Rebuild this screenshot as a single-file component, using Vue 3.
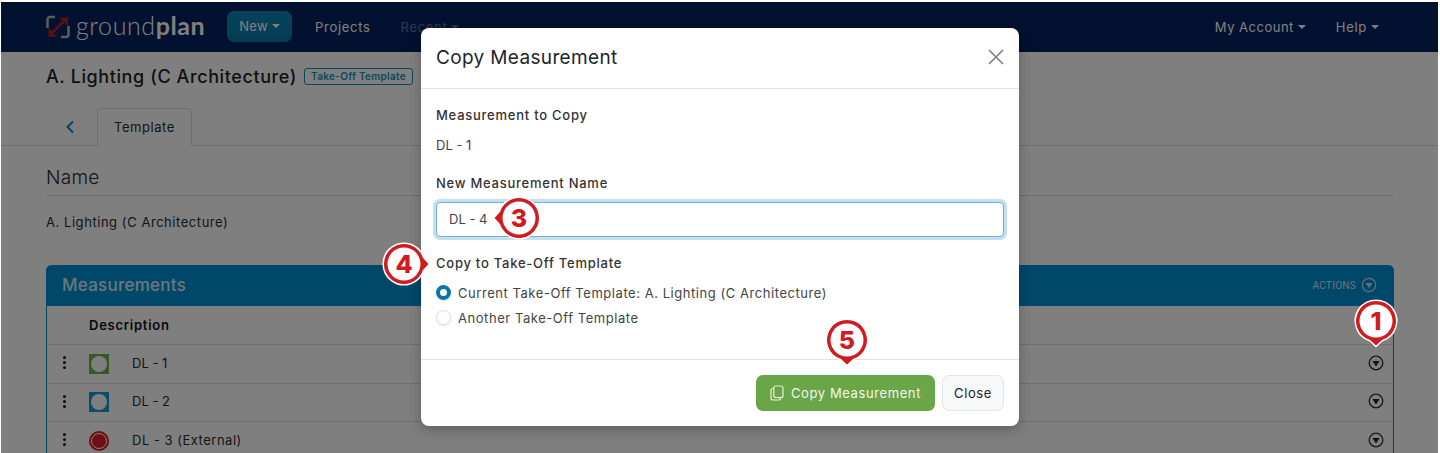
<template>
  <div class="page">
    <header class="nav">
      <div class="brand">
        <svg width="24" height="24" viewBox="0 0 24 24" fill="none">
          <path d="M9 2H4a2.500 2.500 0 0 0-2.500 2.500V13M15 22h5a2.500 2.500 0 0 0 2.500-2.500V11" stroke="#b9b9b9" stroke-width="2.500" />
          <path d="M4 20 20 4" stroke="#a82323" stroke-width="2.800" />
          <path d="M13 2.500h9v9zM2.500 22v-9l9 9z" fill="#a82323" />
        </svg>
        <span class="brand_name">ground<b>plan</b></span>
      </div>
      <a class="new_btn">New<i class="caret"></i></a>
      <a class="nav_link">Projects</a>
      <a class="nav_link recent">Recent<i class="caret"></i></a>
      <span class="spacer"></span>
      <a class="nav_link">My Account<i class="caret"></i></a>
      <a class="nav_link help">Help<i class="caret"></i></a>
    </header>

    <main class="content">
      <div class="title_row">
        <h1>A. Lighting (C Architecture)</h1>
        <span class="badge">Take-Off Template</span>
      </div>
      <div class="tabs">
        <svg class="back" width="12" height="14" viewBox="0 0 12 14" fill="none">
          <path d="M9 1.500 3.500 7 9 12.500" stroke="#0a88bd" stroke-width="2" />
        </svg>
        <div class="tab">Template</div>
      </div>
      <h2 class="section_name">Name</h2>
      <p class="section_value">A. Lighting (C Architecture)</p>

      <section class="card">
        <div class="card_head">
          <span class="card_title">Measurements</span>
          <span class="actions">ACTIONS</span>
          <svg width="16" height="16" viewBox="0 0 16 16" fill="none">
            <circle cx="8" cy="8" r="6.700" stroke="#fff" stroke-width="1.200" opacity=".75" />
            <path d="M4.500 6h7L8 11z" fill="#fff" opacity=".75" />
          </svg>
        </div>
        <div class="table_head">Description</div>
        <div class="row" v-for="row in rows" :key="row.name">
          <span class="kebab"><i></i><i></i><i></i></span>
          <span class="swatch" :class="row.kind"><i></i></span>
          <span class="row_name" :class="row.kind">{{ row.name }}</span>
          <svg class="row_action" width="16" height="16" viewBox="0 0 16 16" fill="none">
            <circle cx="8" cy="8" r="6.800" stroke="#333" stroke-width="1.300" />
            <path d="M4.500 6h7L8 11.500z" fill="#222" />
          </svg>
        </div>
      </section>
    </main>

    <div class="backdrop"></div>

    <div class="modal">
      <div class="modal_head">
        <h3>Copy Measurement</h3>
        <svg width="18" height="18" viewBox="0 0 18 18" fill="none">
          <path d="M2 2l14 14M16 2 2 16" stroke="#7c7c7c" stroke-width="1.600" />
        </svg>
      </div>
      <div class="modal_body">
        <label class="field_label">Measurement to Copy</label>
        <p class="static_value">DL - 1</p>
        <label class="field_label">New Measurement Name</label>
        <input class="text_input" type="text" v-model="newName" />
        <label class="field_label">Copy to Take-Off Template</label>
        <div class="radio_row">
          <span class="radio checked"></span>
          <span>Current Take-Off Template: A. Lighting (C Architecture)</span>
        </div>
        <div class="radio_row">
          <span class="radio"></span>
          <span>Another Take-Off Template</span>
        </div>
      </div>
      <div class="modal_foot">
        <button class="btn_copy">
          <svg width="14" height="16" viewBox="0 0 14 16" fill="none">
            <rect x="3.800" y="1" width="9.200" height="11.500" rx="2" stroke="#e4efdc" stroke-width="1.200" />
            <path d="M3.800 3.500H3a2 2 0 0 0-2 2V13a2 2 0 0 0 2 2h5.500a2 2 0 0 0 2-2v-.5" stroke="#e4efdc" stroke-width="1.200" />
          </svg>
          Copy Measurement
        </button>
        <button class="btn_close">Close</button>
      </div>
    </div>

    <div class="bubble" v-for="b in bubbles" :key="b.num" :class="b.cls">
      <svg width="60" height="60" viewBox="-30 -30 60 60" :style="{ transform: `rotate(${b.angle}deg)` }">
        <path d="M-6 19 0 24.500 6 19A20 20 0 1 0-6 19z" fill="#d01b1f" stroke="#fff" stroke-width="3" stroke-linejoin="miter" paint-order="stroke" />
        <circle r="16.500" fill="#fff" />
      </svg>
      <span>{{ b.num }}</span>
    </div>
  </div>
</template>

<script setup>
import { ref } from 'vue'

const newName = ref('DL - 4')
const rows = [
  { name: 'DL - 1', kind: 'green' },
  { name: 'DL - 2', kind: 'teal' },
  { name: 'DL - 3 (External)', kind: 'red' },
]
const bubbles = [
  { num: 1, cls: 'b1', angle: 0 },
  { num: 3, cls: 'b3', angle: 90 },
  { num: 4, cls: 'b4', angle: -90 },
  { num: 5, cls: 'b5', angle: 0 },
]
</script>

<style>
html,
body {
  margin: 0;
  background: #fff;
  overflow: hidden;
}
</style>

<style scoped>
.page {
  position: relative;
  margin: 2px 2px 0 1px;
  height: 451px;
  overflow: hidden;
  background: #fff;
  font-family: Inter, 'Noto Sans', sans-serif;
  font-size: 13px;
  letter-spacing: 0.55px;
  color: #2b2b2b;
}
.nav {
  height: 50px;
  background: #04235f;
  display: flex;
  align-items: center;
  padding: 0 59px 1px 45px;
  box-sizing: border-box;
  color: #fff;
  letter-spacing: 0.55px;
}
.brand {
  display: flex;
  align-items: center;
  gap: 6px;
  width: 181px;
}
.brand_name {
  font-family: Lato, sans-serif;
  font-size: 25px;
  font-weight: 300;
  letter-spacing: 0.6px;
  margin-top: -4px;
}
.brand_name b {
  font-weight: 700;
}
.new_btn {
  width: 65px;
  height: 31px;
  box-sizing: border-box;
  padding-bottom: 2px;
  border-radius: 7px;
  background: linear-gradient(#0e86ba, #0a78a6);
  display: flex;
  align-items: center;
  justify-content: center;
  letter-spacing: 0.3px;
}
.nav_link {
  margin-left: 23px;
  display: flex;
  align-items: center;
  letter-spacing: 0.7px;
}
.recent {
  margin-left: 30px;
  opacity: 0.35;
}
.help {
  margin-left: 30px;
}
.spacer {
  flex: 1;
}
.caret {
  display: inline-block;
  margin-left: 4px;
  border-left: 4px solid transparent;
  border-right: 4px solid transparent;
  border-top: 4px solid currentColor;
}
.nav_link:nth-last-child(2) {
  letter-spacing: 0.5px;
}
.content {
  padding: 0 44px 0 45px;
}
.title_row {
  display: flex;
  align-items: center;
  gap: 7px;
  height: 50px;
  padding-bottom: 2px;
  box-sizing: border-box;
}
.title_row h1 {
  margin: 0;
  font-size: 18px;
  font-weight: 500;
  letter-spacing: 0.6px;
  color: #222;
  white-space: nowrap;
}
.badge {
  border: 1px solid #0f93b8;
  border-radius: 3px;
  color: #0f93b8;
  font-size: 10px;
  font-weight: 600;
  letter-spacing: 0.3px;
  line-height: 15px;
  padding: 0 6px;
}
.tabs {
  display: flex;
  align-items: flex-end;
  height: 44px;
  margin: 0 -44px 0 -45px;
  padding-left: 63px;
  border-bottom: 1px solid #ddd;
  box-sizing: border-box;
}
.back {
  margin: 0 21px 11px 0;
}
.tab {
  width: 95px;
  height: 38px;
  box-sizing: border-box;
  border: 1px solid #ddd;
  border-bottom: 1px solid #fff;
  margin-bottom: -1px;
  border-radius: 4px 4px 0 0;
  background: #fff;
  text-align: center;
  line-height: 37px;
}
.section_name {
  margin: 20px 0 0;
  height: 29px;
  font-size: 19px;
  font-weight: 300;
  letter-spacing: 0.3px;
  border-bottom: 1px solid #ddd;
}
.section_value {
  margin: 17px 0 0;
  line-height: 18px;
}
.card {
  margin-top: 34px;
  border: 1px solid #0a88bd;
  border-top: none;
  border-radius: 6px 6px 0 0;
}
.card_head {
  height: 41px;
  margin: 0 -1px;
  padding: 0 17px 1px 16px;
  box-sizing: border-box;
  background: #0090d4;
  border-radius: 6px 6px 0 0;
  display: flex;
  align-items: center;
  color: #fff;
}
.card_title {
  flex: 1;
  font-size: 17px;
  font-weight: 500;
  letter-spacing: 0.25px;
  opacity: 0.85;
}
.actions {
  font-family: Roboto, sans-serif;
  font-size: 10px;
  letter-spacing: 0.3px;
  margin-right: 5px;
  opacity: 0.8;
}
.table_head {
  height: 38px;
  line-height: 38px;
  padding-left: 42px;
  font-weight: 600;
  letter-spacing: 0.75px;
  color: #111;
}
.row {
  height: 38.500px;
  border-top: 1px solid #ddd;
  display: flex;
  align-items: center;
  box-sizing: border-box;
}
.kebab {
  width: 3px;
  margin: 0 0 2px 16px;
  display: flex;
  flex-direction: column;
  gap: 2px;
}
.kebab i {
  height: 3px;
  border-radius: 50%;
  background: #111;
}
.swatch {
  width: 20px;
  height: 20px;
  margin-left: 23px;
  display: flex;
  align-items: center;
  justify-content: center;
}
.swatch i {
  width: 16px;
  height: 16px;
  border-radius: 50%;
  background: #fff;
}
.swatch.green {
  background: #6cb24f;
}
.swatch.teal {
  background: #169cc8;
}
.swatch.red {
  border-radius: 50%;
  background: #e01c22;
}
.swatch.red i {
  width: 14px;
  height: 14px;
  background: #e01c22;
  outline: 1px solid #fff;
}
.row_name {
  margin: 0 0 2px 23px;
  flex: 1;
  letter-spacing: 0;
}
.row_name.red {
  letter-spacing: 0.5px;
}
.row_action {
  margin: 0 9px 2px 0;
}
.backdrop {
  position: absolute;
  inset: 0;
  background: rgba(0, 0, 0, 0.5);
}
.modal {
  position: absolute;
  left: 420px;
  top: 26px;
  width: 598px;
  height: 398px;
  background: #fff;
  border-radius: 8px;
  display: flex;
  flex-direction: column;
  box-shadow: 0 4px 14px rgba(0, 0, 0, 0.25);
}
.modal_head {
  height: 61px;
  flex: none;
  box-sizing: border-box;
  border-bottom: 1px solid #dee2e6;
  padding: 0 14px 2px 15px;
  display: flex;
  align-items: center;
  justify-content: space-between;
}
.modal_head h3 {
  margin: 0;
  font-size: 19px;
  font-weight: 400;
  letter-spacing: 0.35px;
  color: #212529;
}
.modal_body {
  flex: 1;
  padding: 17px 15px 0;
  display: flex;
  flex-direction: column;
}
.field_label {
  font-size: 13px;
  font-weight: 500;
  letter-spacing: 0.75px;
  line-height: 18px;
  color: #333;
}
.static_value {
  margin: 12px 0 20px;
  line-height: 18px;
  letter-spacing: 0;
  color: #444;
}
.text_input {
  margin: 10px 0 17px;
  height: 35px;
  box-sizing: border-box;
  border: 1px solid #6db3d6;
  border-radius: 4px;
  box-shadow: 0 0 0 3px #c5dfec;
  padding: 0 12px 2px;
  font: inherit;
  letter-spacing: 0;
  color: #444;
  outline: none;
}
.radio_row {
  display: flex;
  align-items: center;
  gap: 7px;
  height: 25px;
  color: #444;
}
.field_label + .radio_row {
  margin-top: 8px;
}
.radio {
  width: 15px;
  height: 15px;
  box-sizing: border-box;
  border-radius: 50%;
  border: 1px solid #ddd;
  box-shadow: 0 1px 2px rgba(0, 0, 0, 0.12);
}
.radio.checked {
  border: 4.500px solid #0a76a8;
}
.modal_foot {
  height: 67px;
  flex: none;
  box-sizing: border-box;
  border-top: 1px solid #dee2e6;
  padding: 15px 15px 0;
  display: flex;
  justify-content: flex-end;
  gap: 7px;
}
.modal_foot button {
  height: 36px;
  border-radius: 7px;
  font: inherit;
  letter-spacing: 0.6px;
  display: flex;
  align-items: center;
  justify-content: center;
}
.btn_copy {
  width: 179px;
  gap: 7px;
  background: #6aa548;
  border: none;
  color: #f2f7ee;
}
.btn_close {
  width: 62px;
  background: #f7f8fa;
  border: 1px solid #e3e5ea;
  color: #222;
}
.bubble {
  position: absolute;
  width: 60px;
  height: 60px;
  display: flex;
  align-items: center;
  justify-content: center;
}
.bubble svg {
  position: absolute;
  inset: 0;
}
.bubble span {
  position: relative;
  font-family: Inter, sans-serif;
  font-size: 25px;
  font-weight: 800;
  letter-spacing: 0;
  color: #d01b1f;
}
.b1 {
  left: 1345px;
  top: 289px;
}
.b3 {
  left: 488px;
  top: 186px;
}
.b4 {
  left: 373px;
  top: 232px;
}
.b5 {
  left: 816px;
  top: 308px;
}
</style>
